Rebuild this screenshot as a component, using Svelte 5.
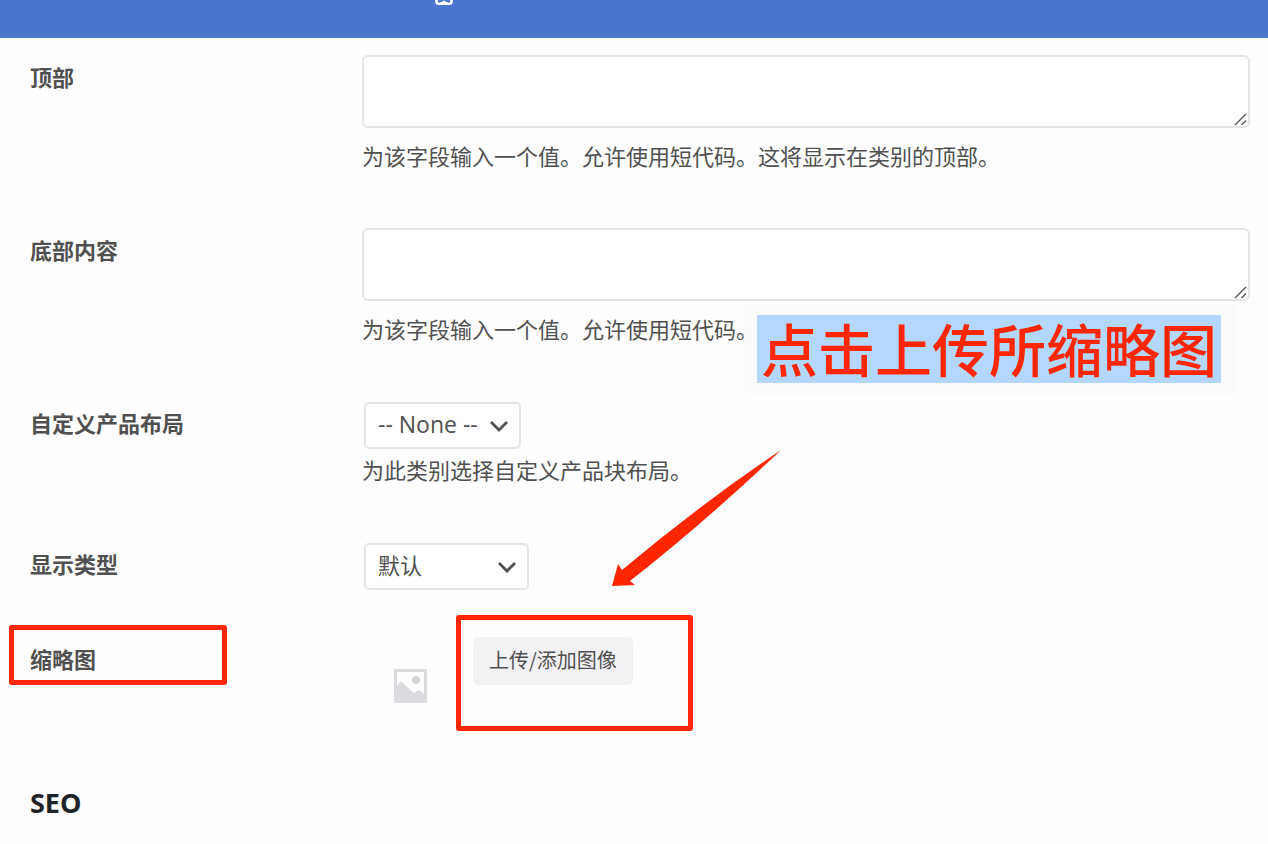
<script lang="ts">
  interface TextField {
    id: string;
    label: string;
    help: string;
  }

  const textFields: TextField[] = [
    { id: 'top', label: '顶部', help: '为该字段输入一个值。允许使用短代码。这将显示在类别的顶部。' },
    { id: 'bottom', label: '底部内容', help: '为该字段输入一个值。允许使用短代码。' }
  ];

  let values = $state<Record<string, string>>({ top: '', bottom: '' });
  let layout = $state('none');
  let display = $state('default');
</script>

{#snippet chevron()}
  <svg class="chevron" viewBox="0 0 18 12" aria-hidden="true">
    <path d="M1 2l8 8 8-8" fill="none" stroke="#505050" stroke-width="2.8" />
  </svg>
{/snippet}

<div class="page">
  <header class="topbar">
    <svg class="topbar-icon" viewBox="0 0 18 6" aria-hidden="true">
      <path d="M1.5 -6V1.5Q1.5 3.7 3.7 3.7H14.3Q16.5 3.7 16.5 1.5V-6" fill="none" stroke="#fff" stroke-width="2.6" />
      <path d="M5 3L9 .6l4 2.4Z" fill="#fff" />
    </svg>
  </header>

  <form class="form">
    {#each textFields as field}
      <div class="row">
        <label class="label" for={field.id}>{field.label}</label>
        <div class="field">
          <div class="area-wrap">
            <textarea id={field.id} bind:value={values[field.id]}></textarea>
            <svg class="grip" viewBox="0 0 14 14" aria-hidden="true">
              <path d="M1 12L12 1M7.500 12l4.500-4.500" fill="none" stroke="#555" stroke-width="1.4" />
            </svg>
          </div>
          <p class="help">{field.help}</p>
        </div>
      </div>
    {/each}

    <div class="row">
      <label class="label" for="layout">自定义产品布局</label>
      <div class="field">
        <div class="select-wrap">
          <select id="layout" bind:value={layout}>
            <option value="none">-- None --</option>
          </select>
          {@render chevron()}
        </div>
        <p class="help near">为此类别选择自定义产品块布局。</p>
      </div>
    </div>

    <div class="row">
      <label class="label" for="display">显示类型</label>
      <div class="field">
        <div class="select-wrap wide">
          <select id="display" bind:value={display}>
            <option value="default">默认</option>
          </select>
          {@render chevron()}
        </div>
      </div>
    </div>

    <div class="row thumb-row">
      <label class="label" for="upload">缩略图</label>
      <div class="thumb-field">
        <svg class="thumb" viewBox="0 0 35 35" aria-hidden="true">
          <path fill="#d9dbde" fill-rule="evenodd" d="M1 0H34V34H1ZM4 3V17L8 12.500L21 24Q25 20 28 22L31 25V3Z" />
          <circle cx="23" cy="11" r="4" fill="#d3d5d9" />
        </svg>
        <button type="button" id="upload">上传/添加图像</button>
      </div>
      <span class="mark mark-label"></span>
      <span class="mark mark-button"></span>
    </div>

    <h2>SEO</h2>
  </form>

  <!-- Tutorial annotations over the form -->
  <div class="callout"><mark>点击上传所缩略图</mark></div>
  <svg class="arrow" viewBox="0 0 170 138" aria-hidden="true">
    <path fill="#ff2600" d="M169 0Q90 53 10 120L6 114L0 136L23 135L18 131Q92 73 169 0Z" />
  </svg>
</div>

<style>
  :global(body) {
    margin: 0;
    background: #fefefe;
  }

  .page {
    position: relative;
    overflow: hidden;
    padding-bottom: 16px;
    font-family: 'Open Sans', 'Noto Sans CJK SC', sans-serif;
    font-size: 22px;
    line-height: 30px;
    color: #505050;
  }

  .topbar {
    height: 38px;
    padding-left: 435px;
    background: #4877cd;
  }
  .topbar-icon {
    display: block;
    width: 18px;
    height: 6px;
  }

  .form { padding: 17px 18px 0 30px; }

  .row {
    position: relative;
    display: grid;
    grid-template-columns: 332px 1fr;
    align-items: start;
    padding-bottom: 47px;
  }
  .label {
    padding-top: 6px;
    font-family: 'Noto Sans CJK SC', sans-serif;
    font-weight: 700;
  }

  .area-wrap { position: relative; }
  textarea {
    display: block;
    box-sizing: border-box;
    width: 100%;
    height: 73px;
    padding: 8px 14px;
    border: 2px solid #e5e5e5;
    border-radius: 6px;
    background: #fff;
    font: inherit;
    color: inherit;
    resize: none;
  }
  .grip {
    position: absolute;
    right: 2px;
    bottom: 1px;
    width: 14px;
    height: 14px;
  }

  .help {
    margin: 12px 0 11px;
    font-family: 'Noto Sans CJK SC', sans-serif;
  }
  .help.near { margin-top: 5px; }

  .select-wrap {
    position: relative;
    width: 157px;
    margin: 1px 0 0 2px;
    font-size: 23px;
  }
  .select-wrap.wide {
    width: 165px;
    font-size: 22px;
  }
  select {
    display: block;
    box-sizing: border-box;
    width: 100%;
    height: 47px;
    padding: 0 32px 4px 12px;
    border: 2px solid #e5e5e5;
    border-radius: 5px;
    background: #fff;
    font: inherit;
    color: inherit;
    appearance: none;
  }
  .chevron {
    position: absolute;
    right: 13px;
    top: 18px;
    width: 18px;
    height: 12px;
    pointer-events: none;
  }

  .thumb-row { padding-bottom: 81px; }
  .thumb-field {
    display: flex;
    align-items: flex-start;
    gap: 45px;
    padding-left: 31px;
  }
  .thumb {
    width: 35px;
    height: 35px;
    margin-top: 32px;
  }
  button {
    height: 48px;
    padding: 0 16px 4px;
    border: 0;
    border-radius: 5px;
    background: #f2f2f4;
    font-family: 'Noto Sans CJK SC', sans-serif;
    font-size: 20px;
    color: inherit;
  }

  h2 {
    margin: 0;
    font-size: 27px;
    line-height: 36px;
    font-weight: 700;
    color: #1d2327;
  }

  .mark {
    position: absolute;
    box-sizing: border-box;
    border: 5px solid #ff2600;
    border-radius: 3px;
    pointer-events: none;
  }
  .mark-label {
    left: -21px;
    top: -12px;
    width: 218px;
    height: 60px;
  }
  .mark-button {
    left: 426px;
    top: -22px;
    width: 237px;
    height: 116px;
  }

  .callout {
    position: absolute;
    left: 743px;
    top: 304px;
    padding: 11px 16px 11px 14px;
    border-radius: 8px;
    background: rgba(0, 0, 0, 0.01);
    white-space: nowrap;
  }
  mark {
    display: block;
    padding: 0 4px 4px;
    background: #b3d7ff;
    color: #ff2600;
    font-family: 'Noto Sans CJK SC', sans-serif;
    font-size: 57px;
    font-weight: 500;
    line-height: 64px;
  }

  .arrow {
    position: absolute;
    left: 612px;
    top: 450px;
    width: 170px;
    height: 138px;
    pointer-events: none;
  }
</style>
